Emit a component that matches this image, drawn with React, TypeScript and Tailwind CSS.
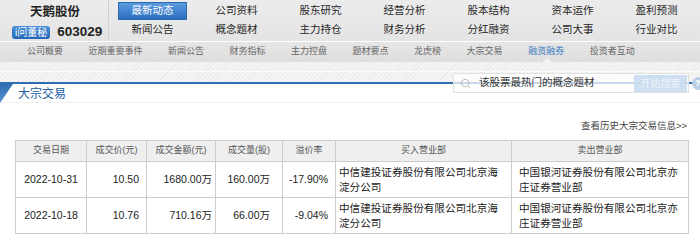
import { Search } from 'lucide-react';

const topRow = ['公司资料', '股东研究', '经营分析', '股本结构', '资本运作', '盈利预测'];
const bottomRow = ['新闻公告', '概念题材', '主力持仓', '财务分析', '分红融资', '公司大事', '行业对比'];
const subNav = ['公司概要', '近期重要事件', '新闻公告', '财务指标', '主力控盘', '题材要点', '龙虎榜', '大宗交易', '融资融券', '投资者互动'];

const rows = [
    {
        date: '2022-10-31',
        price: '10.50',
        amount: '1680.00万',
        volume: '160.00万',
        rate: '-17.90%',
        buyer: '中信建投证券股份有限公司北京海淀分公司',
        seller: '中国银河证券股份有限公司北京亦庄证券营业部',
    },
    {
        date: '2022-10-18',
        price: '10.76',
        amount: '710.16万',
        volume: '66.00万',
        rate: '-9.04%',
        buyer: '中信建投证券股份有限公司北京海淀分公司',
        seller: '中国银河证券股份有限公司北京亦庄证券营业部',
    },
];

const stripes =
    'bg-[repeating-linear-gradient(135deg,#f5f5f5_0px,#f5f5f5_2px,#ebebeb_2px,#ebebeb_3px)]';

const App = () => {
    return (
        <div className="relative w-[700px] h-[243px] overflow-hidden bg-white text-[#222] font-['Liberation_Sans','Noto_Sans_CJK_SC',sans-serif]">
            {/* top header */}
            <div className="flex h-[41px] bg-gradient-to-b from-[#ececec] to-[#e4e4e4]">
                <div className="w-[109px] shrink-0 border-r border-[#d2d2d2]">
                    <div className="pl-[30px] pt-[3px] text-[12.5px] leading-[18px] font-bold">
                        天鹅股份
                    </div>
                    <div className="flex items-center gap-[7px] pl-[12px] mt-[2px]">
                        <span className="h-[13px] px-[3px] rounded-[3px] bg-gradient-to-b from-[#4a8fd8] to-[#2467b8] text-white text-[10px] leading-[13px]">
                            i问董秘
                        </span>
                        <span className="text-[13.5px] font-bold leading-[18px]">603029</span>
                    </div>
                </div>
                <div className="pl-[9px] pt-[2px] grid grid-cols-[repeat(7,84px)] grid-rows-[18px_19px] text-[10.5px] text-[#262626]">
                    <div className="w-[69px] h-[18px] flex items-center justify-center text-white bg-gradient-to-b from-[#5a9be0] to-[#2d6fc0] border border-[#2d68ad]">
                        最新动态
                    </div>
                    {topRow.map((t) => (
                        <div key={t} className="w-[69px] h-[18px] flex items-center justify-center">
                            {t}
                        </div>
                    ))}
                    {bottomRow.map((t) => (
                        <div key={t} className="w-[69px] h-[19px] flex items-center justify-center pt-[1px]">
                            {t}
                        </div>
                    ))}
                </div>
            </div>

            {/* sub navigation */}
            <div className="relative h-[21px] border-t border-white bg-gradient-to-b from-[#e6e6e6] to-[#dedede] flex items-center pl-[27px] gap-[25.5px] text-[9px] text-[#666]">
                {subNav.map((t) => (
                    <span key={t} className={t === '融资融券' ? 'text-[#3a7bc0]' : ''}>
                        {t}
                    </span>
                ))}
                <span className="absolute left-[542px] bottom-0 w-0 h-0 border-x-[5px] border-x-transparent border-b-[4px] border-b-[#f2f2f2]" />
            </div>

            {/* striped band */}
            <div className={`h-[20px] ${stripes} flex flex-col`}>
                <div className="h-[9px]" />
                <div className="h-px bg-[#fbfbfb]" />
            </div>
            <div className="h-[2px] bg-[#2f6eb3]" />

            {/* title */}
            <div className="flex h-[19px] border-b border-[#f0f0f0]">
                <svg width="13" height="19" viewBox="0 0 13 19" className="shrink-0">
                    <defs>
                        <linearGradient id="tab" x1="0" y1="0" x2="0" y2="1">
                            <stop offset="0" stopColor="#2f6eb3" />
                            <stop offset="1" stopColor="#5b93cf" />
                        </linearGradient>
                    </defs>
                    <polygon points="0,0 13,0 0,19" fill="url(#tab)" />
                </svg>
                <span className="ml-[5px] text-[12px] leading-[20px] text-[#215ea3]">大宗交易</span>
            </div>

            {/* search box over the band */}
            <div className="absolute left-[453px] top-[73px] w-[236px] h-[20px] flex items-center border border-[#e2e2e2] bg-white/75">
                <Search size={11} strokeWidth={2} className="ml-[6px] text-[#b4b4b4]" />
                <span className="ml-[8px] text-[10.5px] text-[#333] flex-1">该股票最热门的概念题材</span>
                <span className="mr-[1px] w-[53px] h-[17px] flex items-center justify-center bg-[#c6d9ee]/85 text-[10px] text-[#eef3f9]">
                    开始搜索
                </span>
            </div>
            <div className="absolute left-[692px] top-[77px] w-[13px] h-[13px] rounded-full bg-[#b9cfe6] text-white text-[9px] leading-[13px] pl-[3px] font-bold">
                ?
            </div>

            {/* history link */}
            <div className="h-[37px] flex items-end pb-[7px] justify-end pr-[13px] text-[9.5px] text-[#444]">
                查看历史大宗交易信息&gt;&gt;
            </div>

            {/* table */}
            <table className="ml-[15px] w-[673px] table-fixed border-collapse text-[10.5px]">
                <colgroup>
                    <col className="w-[71px]" />
                    <col className="w-[60px]" />
                    <col className="w-[69px]" />
                    <col className="w-[67px]" />
                    <col className="w-[53px]" />
                    <col className="w-[176px]" />
                    <col className="w-[177px]" />
                </colgroup>
                <thead>
                    <tr className="h-[21px] bg-[#efefef] text-[9px] text-[#555]">
                        {['交易日期', '成交价(元)', '成交金额(元)', '成交量(股)', '溢价率', '买入营业部', '卖出营业部'].map((h) => (
                            <th key={h} className="border border-[#cdcdcd] font-normal p-0">
                                {h}
                            </th>
                        ))}
                    </tr>
                </thead>
                <tbody>
                    {rows.map((r) => (
                        <tr key={r.date} className="h-[36px]">
                            <td className="border border-[#cdcdcd] text-center p-0">{r.date}</td>
                            <td className="border border-[#cdcdcd] text-right pr-[7px]">{r.price}</td>
                            <td className="border border-[#cdcdcd] text-right pr-[3px]">{r.amount}</td>
                            <td className="border border-[#cdcdcd] text-right pr-[12px]">{r.volume}</td>
                            <td className="border border-[#cdcdcd] text-right pr-[7px]">{r.rate}</td>
                            <td className="border border-[#cdcdcd] text-left pl-[3px] pr-[4px] text-[10.6px] leading-[15px]">
                                {r.buyer}
                            </td>
                            <td className="border border-[#cdcdcd] text-left pl-[7px] pr-[4px] text-[10.6px] leading-[15px]">
                                {r.seller}
                            </td>
                        </tr>
                    ))}
                </tbody>
            </table>
        </div>
    );
};

export default App;
